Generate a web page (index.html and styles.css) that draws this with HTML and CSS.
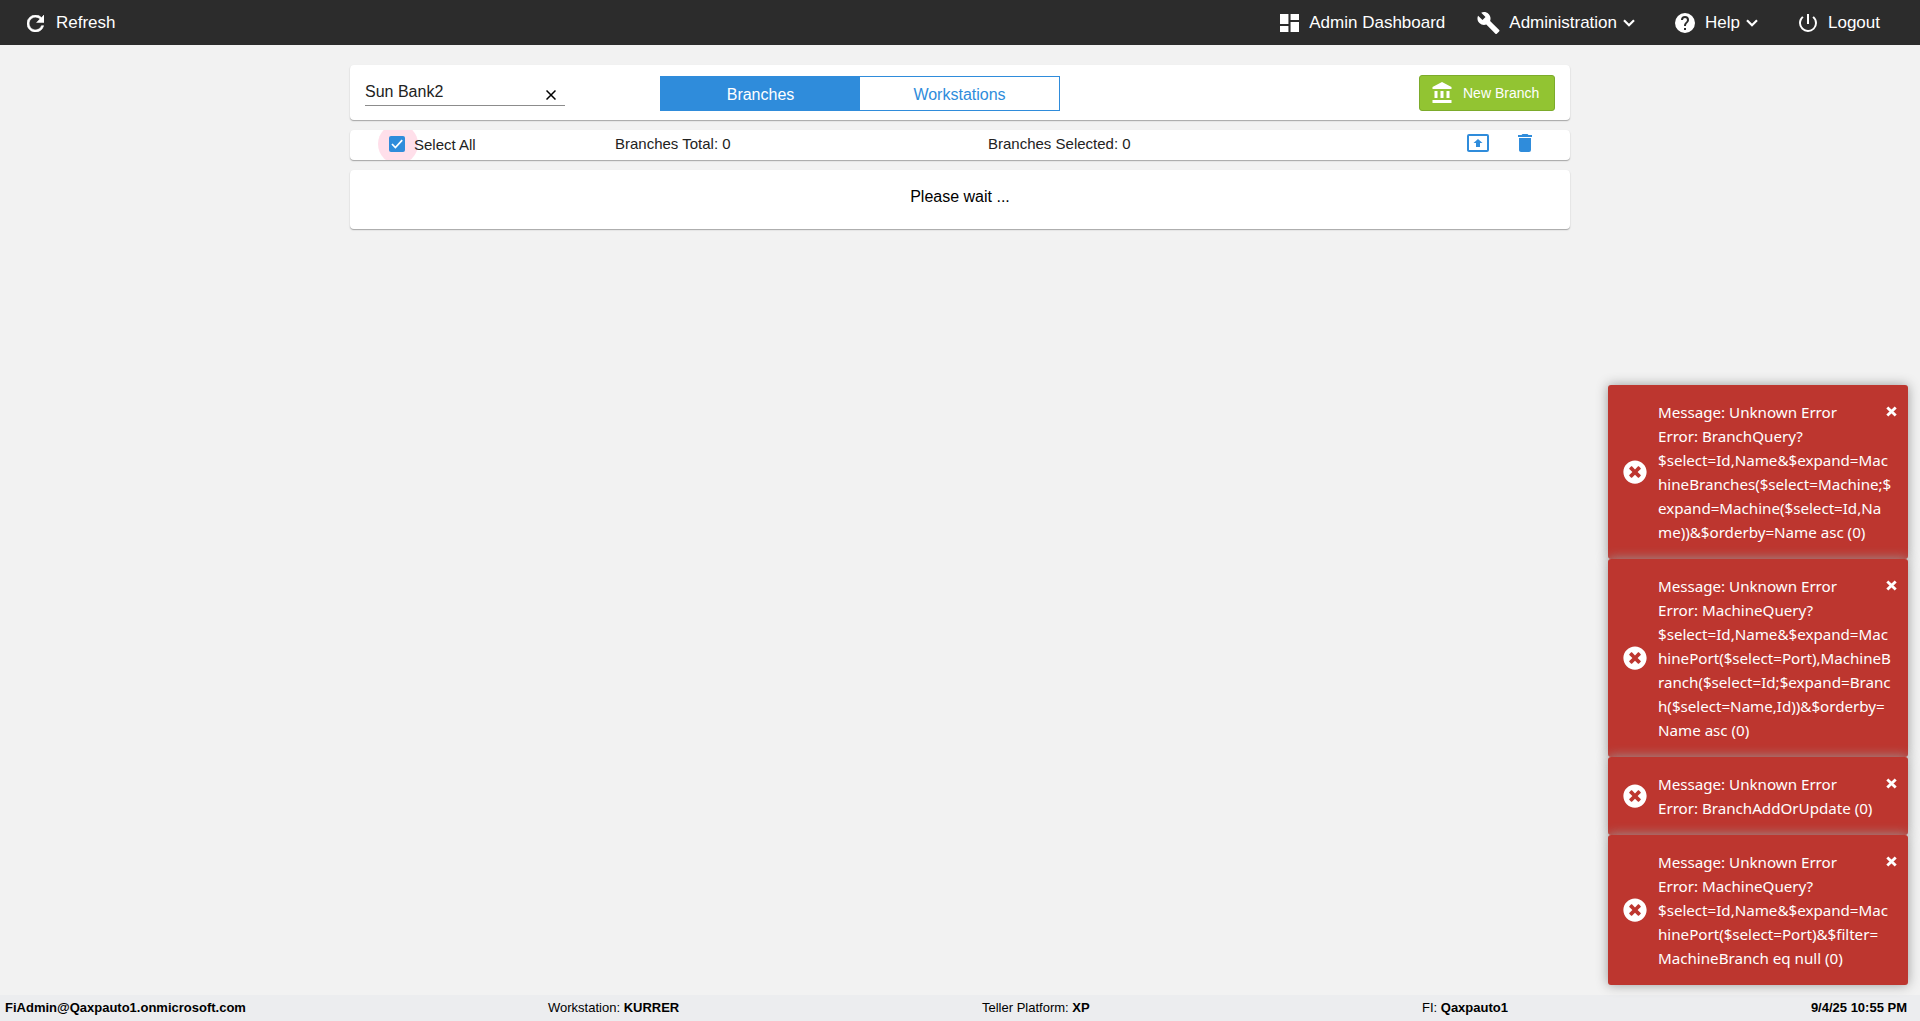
FILE: index.html
```html
<!DOCTYPE html>
<html lang="en">
<head>
<meta charset="utf-8">
<title>Admin Dashboard</title>
<link rel="stylesheet" href="styles.css">
</head>
<body>
<svg class="symbols" aria-hidden="true">
  <symbol id="error" viewBox="0 0 512 512"><path d="M256 8C119 8 8 119 8 256s111 248 248 248 248-111 248-248S393 8 256 8zm121.600 313.100c4.700 4.700 4.700 12.300 0 17L338 377.600c-4.700 4.700-12.300 4.700-17 0L256 312l-65.100 65.600c-4.700 4.700-12.300 4.700-17 0L134.400 338c-4.700-4.700-4.700-12.300 0-17l65.600-65-65.600-65.100c-4.700-4.700-4.700-12.300 0-17l39.600-39.600c4.700-4.700 12.300-4.700 17 0l65 65.700 65.100-65.600c4.700-4.700 12.300-4.700 17 0l39.600 39.600c4.700 4.700 4.700 12.300 0 17L312 256l65.600 65.100z"/></symbol>
  <symbol id="close" viewBox="0 0 11 11"><path d="M1.300 1.500L9.700 9.500M9.700 1.500L1.300 9.500" stroke="#fff" stroke-width="2.900"/></symbol>
  <symbol id="chevron" viewBox="0 0 12 8"><path d="M1 1.200L6 6.200L11 1.200" fill="none" stroke="#fff" stroke-width="2.200"/></symbol>
</svg>
<header class="topbar">
  <a class="nav refresh"><svg class="i-refresh" viewBox="4 4 16 16"><path stroke="#fff" stroke-width=".5" d="M17.650 6.350A7.958 7.958 0 0 0 12 4a8 8 0 1 0 7.730 10h-2.080A6 6 0 1 1 12 6c1.660 0 3.140.690 4.220 1.780L13 11h7V4l-2.350 2.350z"/></svg><span>Refresh</span></a>
  <nav class="menu">
    <a class="nav dash"><svg class="i-dash" viewBox="3 3 18 18" preserveAspectRatio="none"><path d="M3 13h8V3H3v10zm0 8h8v-6H3v6zm10 0h8V11h-8v10zm0-18v6h8V3h-8z"/></svg><span>Admin Dashboard</span></a>
    <a class="nav admin"><svg class="i-wrench" viewBox="1 1 22 22"><path d="M22.700 19l-9.100-9.100c.9-2.300.4-5-1.500-6.900-2-2-5-2.400-7.400-1.300L9 6 6 9 1.600 4.700C.4 7.100.9 10.100 2.900 12.100c1.900 1.900 4.600 2.400 6.900 1.500l9.100 9.100c.4.400 1 .4 1.400 0l2.300-2.300c.5-.4.500-1.100.1-1.400z"/></svg><span>Administration</span><svg class="chev"><use href="#chevron"/></svg></a>
    <a class="nav help"><svg class="i-help" viewBox="2 2 20 20"><path d="M12 2a10 10 0 1 0 0 20 10 10 0 0 0 0-20zm1 17h-2v-2h2v2zm2.070-7.750l-.9.920C13.450 12.900 13 13.500 13 15h-2v-.5c0-1.100.450-2.100 1.170-2.830l1.240-1.260c.370-.360.590-.860.590-1.410a2 2 0 1 0-4 0H8a4 4 0 1 1 8 0c0 .880-.360 1.680-.930 2.250z"/></svg><span>Help</span><svg class="chev"><use href="#chevron"/></svg></a>
    <a class="nav logout"><svg class="i-power" viewBox="3 3 18 18"><path d="M13 3h-2v10h2V3zm4.830 2.170l-1.420 1.420A6.920 6.920 0 0 1 19 12a7 7 0 1 1-11.420-5.420L6.170 5.170A8.932 8.932 0 0 0 3 12a9 9 0 0 0 18 0c0-2.740-1.230-5.180-3.170-6.830z"/></svg><span>Logout</span></a>
  </nav>
</header>
<main class="page">
  <section class="card toolbar">
    <div class="field"><span>Sun Bank2</span><svg class="clear" viewBox="0 0 10 10"><path d="M.5.5l9 9M9.500.5l-9 9" stroke="#000" stroke-width="1.500"/></svg></div>
    <div class="tabs"><div class="tab active">Branches</div><div class="tab">Workstations</div></div>
    <button class="new"><svg class="i-bank" viewBox="2 1 19 21"><path d="M4 10v7h3v-7H4zm6 0v7h3v-7h-3zM2 22h19v-3H2v3zm14-12v7h3v-7h-3zm-4.500-9L2 6v2h19V6l-9.500-5z"/></svg><span>New Branch</span></button>
  </section>
  <section class="card summary">
    <label class="select-all"><span class="box"><svg viewBox="0 0 16 16"><path d="M3 8l3.400 3.500L13.200 4.200" fill="none" stroke="#fff" stroke-width="1.700"/></svg></span><span class="label">Select All</span></label>
    <span class="total">Branches Total: 0</span>
    <span class="selected">Branches Selected: 0</span>
    <svg class="i-present" viewBox="1 3 22 18"><path d="M21 3H3a2 2 0 0 0-2 2v14c0 1.100.9 2 2 2h18a2 2 0 0 0 2-2V5a2 2 0 0 0-2-2zm0 16H3V5h18v14zM10 16h4v-4h2.500L12 8l-4.500 4H10v4z"/></svg>
    <svg class="i-trash" viewBox="5 3 14 18"><path d="M6 19c0 1.100.9 2 2 2h8a2 2 0 0 0 2-2V7H6v12zM19 4h-3.500l-1-1h-5l-1 1H5v2h14V4z"/></svg>
  </section>
  <section class="card wait">Please wait ...</section>
</main>
<aside class="toasts">
  <div class="toast"><svg class="i-error"><use href="#error"/></svg><p>Message: Unknown Error<br>Error: BranchQuery?<br>$select=Id,Name&amp;$expand=Mac<br>hineBranches($select=Machine;$<br>expand=Machine($select=Id,Na<br>me))&amp;$orderby=Name asc (0)</p><svg class="i-close"><use href="#close"/></svg></div>
  <div class="toast"><svg class="i-error"><use href="#error"/></svg><p>Message: Unknown Error<br>Error: MachineQuery?<br>$select=Id,Name&amp;$expand=Mac<br>hinePort($select=Port),MachineB<br>ranch($select=Id;$expand=Branc<br>h($select=Name,Id))&amp;$orderby=<br>Name asc (0)</p><svg class="i-close"><use href="#close"/></svg></div>
  <div class="toast"><svg class="i-error"><use href="#error"/></svg><p>Message: Unknown Error<br>Error: BranchAddOrUpdate (0)</p><svg class="i-close"><use href="#close"/></svg></div>
  <div class="toast"><svg class="i-error"><use href="#error"/></svg><p>Message: Unknown Error<br>Error: MachineQuery?<br>$select=Id,Name&amp;$expand=Mac<br>hinePort($select=Port)&amp;$filter=<br>MachineBranch eq null (0)</p><svg class="i-close"><use href="#close"/></svg></div>
</aside>
<footer class="status">
  <b>FiAdmin@Qaxpauto1.onmicrosoft.com</b>
  <span>Workstation: <b>KURRER</b></span>
  <span>Teller Platform: <b>XP</b></span>
  <span>FI: <b>Qaxpauto1</b></span>
  <b>9/4/25 10:55 PM</b>
</footer>
</body>
</html>
```
FILE: styles.css
```css
* { box-sizing: border-box; }
body { margin: 0; height: 1021px; display: flex; flex-direction: column; background: #f2f2f2; font: 16px/20px "Liberation Sans", Arial, sans-serif; color: #000; overflow: hidden; }
svg { display: block; flex: none; }
.symbols { position: absolute; width: 0; height: 0; }

.topbar { flex: none; height: 45px; padding: 1px 40px 0 27px; background: #2c2c2c; display: flex; justify-content: space-between; color: #fff; font-size: 17px; }
.nav, .menu { display: flex; align-items: center; fill: #fff; white-space: nowrap; }
.nav span { padding-bottom: 1px; }
.refresh { gap: 12px; }
.i-refresh { width: 17px; height: 17px; }
.menu .dash { margin-right: 32px; }
.menu .admin { margin-right: 40px; }
.menu .help { margin-right: 41px; }
.i-dash { width: 19px; height: 18px; margin-right: 10px; }
.i-wrench { width: 23px; height: 22px; margin-right: 9px; }
.i-help { width: 20px; height: 20px; margin-right: 10px; }
.i-power { width: 18px; height: 18px; margin-right: 11px; }
.chev { width: 12px; height: 8px; margin-left: 6px; }

.page { flex: 1; width: 1220px; margin: 20px auto 0; display: flex; flex-direction: column; gap: 10px; }
.card { background: #fff; border-radius: 4px; box-shadow: 0 1px 1px rgba(0,0,0,.25), 0 1px 2px rgba(0,0,0,.1); }
.toolbar { height: 55px; padding: 10px 15px 0; display: flex; align-items: flex-start; }
.field { width: 200px; height: 31px; border-bottom: 1px solid #8c8c8c; padding: 0 9px 0 0; display: flex; justify-content: space-between; align-items: flex-start; color: #222; line-height: 34px; }
.clear { width: 10px; height: 10px; margin-top: 15px; }
.tabs { width: 400px; height: 35px; margin: 1px 0 0 95px; display: flex; border: 1px solid #2f8cdb; }
.tab { flex: 1; text-align: center; line-height: 35px; color: #2f8cdb; background: #fff; }
.tab.active { flex: 0 0 199px; background: #2f8cdb; color: #fff; }
.new { width: 136px; height: 36px; margin-left: auto; padding: 0 0 0 12px; border: 1px solid #7cab2b; border-radius: 3px; background: #92c432; color: #fff; fill: #fff; font: 14px/16px "Liberation Sans", Arial, sans-serif; display: flex; align-items: center; gap: 11px; white-space: nowrap; }
.i-bank { width: 20px; height: 21px; margin-top: -1px; }
.summary { height: 30px; overflow: hidden; display: grid; grid-template-columns: 265px 373px 478px 52px 1fr; font-size: 15px; line-height: 28px; color: #222; fill: #2f8cdb; }
.select-all { display: flex; align-items: center; padding-left: 39px; height: 28px; }
.box { width: 16px; height: 16px; position: relative; }
.box::before { content: ""; position: absolute; left: -11px; top: -12px; width: 40px; height: 40px; border-radius: 50%; background: rgba(255,64,129,.17); }
.box svg { position: absolute; left: 0; top: 0; width: 16px; height: 16px; background: #2f8cdb; border-radius: 2px; }
.label { margin-left: 9px; padding-top: 2px; position: relative; }
.i-present { width: 22px; height: 18px; margin: 4px 0 0 1px; }
.i-trash { width: 14px; height: 18px; margin: 4px 0 0; }
.wait { height: 59px; text-align: center; padding-top: 17px; }

.toasts { position: absolute; right: 12px; top: 385px; width: 300px; }
.toast { background: #bd362f; border-radius: 3px; box-shadow: 0 0 12px #999; padding: 15px 11px 15px 15px; display: flex; align-items: center; color: #fff; fill: #fff; }
.toast p { flex: 1; min-width: 0; margin: 0 0 0 11px; font: 15.200px/24px "Noto Sans", "Open Sans", sans-serif; letter-spacing: -.03px; white-space: nowrap; }
.i-error { width: 24px; height: 24px; }
.i-close { width: 11px; height: 11px; align-self: flex-start; margin-top: 6px; }

.status { flex: none; height: 26px; padding: 0 13px 0 5px; background: #ecedef; display: grid; grid-template-columns: 543px 434px 440px 1fr auto; font-size: 13px; line-height: 25px; }
```
